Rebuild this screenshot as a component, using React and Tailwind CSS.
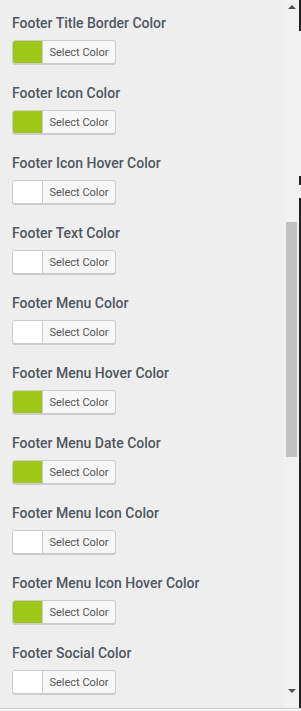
import React from "react";

const items = [
  ["Footer Title Border Color", true],
  ["Footer Icon Color", true],
  ["Footer Icon Hover Color", false],
  ["Footer Text Color", false],
  ["Footer Menu Color", false],
  ["Footer Menu Hover Color", true],
  ["Footer Menu Date Color", true],
  ["Footer Menu Icon Color", false],
  ["Footer Menu Icon Hover Color", true],
  ["Footer Social Color", false],
];

function ColorControl({ label, green }) {
  return (
    <div className="h-[70px] flex flex-col">
      <div className="h-[20px] mt-[13px] leading-[20px] text-[14px] font-medium text-[#50575e] whitespace-nowrap">
        {label}
      </div>
      <div className="mt-[7px] flex h-[24px] w-[104px] border border-[#ccc] rounded-[3px] shadow-[0_1px_0_#ccc] overflow-hidden bg-[#f7f7f7]">
        <div className={"w-[30px] h-full border-r border-[#ccc] " + (green ? "bg-[#a1c61a]" : "bg-white")} />
        <div className="flex-1 flex items-center justify-center text-[11px] text-[#555] leading-none">
          Select Color
        </div>
      </div>
    </div>
  );
}

export default function App() {
  return (
    <div
      className="w-[301px] h-[711px] bg-[#eeeeee] flex overflow-hidden relative"
      style={{ fontFamily: "Roboto, 'Liberation Sans', sans-serif" }}
    >
      <div className="w-[284px] h-[708px] pl-[12px] overflow-hidden">
        {items.map(([l, g]) => (
          <ColorControl key={l} label={l} green={g} />
        ))}
      </div>
      <div className="w-[15px] h-[708px] bg-[#f1f1f1] relative">
        <div className="absolute left-[4px] top-[5px] w-0 h-0 border-l-[4px] border-r-[4px] border-b-[4px] border-l-transparent border-r-transparent border-b-[#505050]" />
        <div className="absolute left-[2px] top-[222px] w-[11px] h-[235px] bg-[#c1c1c1]" />
        <div className="absolute left-[4px] top-[689px] w-0 h-0 border-l-[4px] border-r-[4px] border-t-[4px] border-l-transparent border-r-transparent border-t-[#505050]" />
      </div>
      <div className="w-[2px] h-[708px] flex flex-col">
        <div className="h-[31px] bg-[#222]" />
        <div className="h-[145px] bg-[#f1f1f1]" />
        <div className="h-[9px] bg-[#222]" />
        <div className="h-[13px] bg-[#f1f1f1]" />
        <div className="flex-1 bg-[#222]" />
      </div>
      <div className="absolute left-0 right-0 top-[708px] h-[1px] bg-[#d0d0d0]" />
      <div className="absolute left-0 right-0 top-[709px] h-[2px] bg-[#f5f5f5]" />
    </div>
  );
}
